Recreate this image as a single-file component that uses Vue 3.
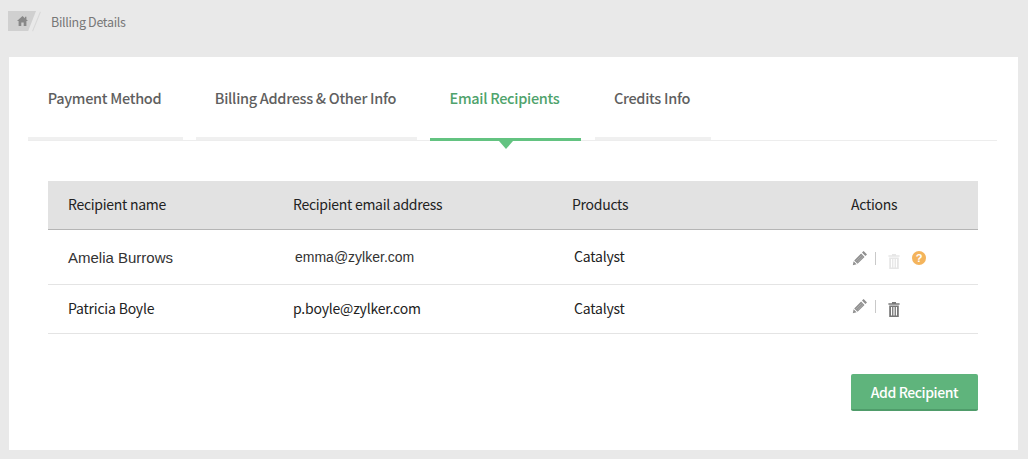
<script setup>
const tabs = [
  { label: 'Payment Method', width: 155 },
  { label: 'Billing Address & Other Info', width: 221 },
  { label: 'Email Recipients', width: 151, active: true },
  { label: 'Credits Info', width: 116 },
];

const rows = [
  { name: 'Amelia Burrows', email: 'emma@zylker.com', product: 'Catalyst', primary: true },
  { name: 'Patricia Boyle', email: 'p.boyle@zylker.com', product: 'Catalyst', primary: false },
];
</script>

<template>
  <div class="page">
    <div class="crumbs">
      <span class="home">
        <svg width="11" height="10" viewBox="0 0 11 10">
          <path d="M5.5 0 0 5h1.6v5h2.7V6.6h2.4V10h2.7V5H11L9.4 3.5V.8H8v1.4z" fill="#888" />
        </svg>
      </span>
      <span class="crumb-slash"></span>
      <span class="crumb-text">Billing Details</span>
    </div>

    <div class="card">
      <div class="tabs">
        <div
          v-for="tab in tabs"
          :key="tab.label"
          class="tab"
          :class="{ active: tab.active }"
          :style="{ width: tab.width + 'px' }"
        >
          {{ tab.label }}
        </div>
      </div>

      <div class="table">
        <div class="row head">
          <div>Recipient name</div>
          <div>Recipient email address</div>
          <div>Products</div>
          <div>Actions</div>
        </div>
        <div v-for="row in rows" :key="row.email" class="row body" :class="{ primary: row.primary }">
          <div class="name">{{ row.name }}</div>
          <div class="email">{{ row.email }}</div>
          <div class="product">{{ row.product }}</div>
          <div class="actions">
            <svg class="pencil" width="16" height="16" viewBox="0 0 16 16">
              <path d="M11.6 1 15 4.4 13.4 6 10 2.6zM9.1 3.5l3.4 3.4-6.9 6.9-3.4-3.4zM1.6 11.3l3 3L.8 15.2z" fill="#8f8f8f" />
              <path d="M9.8 5.4 4.2 11M11 6.6 5.4 12.2" stroke="#c4c4c4" stroke-width=".6" fill="none" />
            </svg>
            <span class="sep"></span>
            <svg class="trash" width="12" height="15" viewBox="0 0 12 15">
              <path d="M4 0h4v1.2h3.6v1.6H.4V1.2H4zM1.2 3.6h9.6V15H1.2zM3 5v8.6h1.1V5zm2.4 0v8.6h1.2V5zm2.5 0v8.6H9V5z" fill-rule="evenodd" />
            </svg>
            <span v-if="row.primary" class="help">?</span>
          </div>
        </div>
      </div>

      <div class="footer">
        <button class="add-btn">Add Recipient</button>
      </div>
    </div>
  </div>
</template>

<style>
html, body {
  margin: 0;
  background: #e9e9e9;
}
</style>

<style scoped>
.page {
  width: 1028px;
  height: 459px;
  box-sizing: border-box;
  padding: 0 10px 0 9px;
  overflow: hidden;
  background: #e9e9e9;
  font-family: "Noto Sans CJK SC", "Noto Sans", sans-serif;
}

.crumbs {
  height: 57px;
  box-sizing: border-box;
  padding-top: 11px;
  display: flex;
  align-items: flex-start;
}

.home {
  width: 28px;
  height: 20px;
  margin-left: -1px;
  background: #d0d0d0;
  clip-path: polygon(0 0, 100% 0, 72% 100%, 0 100%);
  display: flex;
  justify-content: flex-start;
  align-items: center;
  padding-left: 9px;
  box-sizing: border-box;
}

.crumb-slash {
  width: 1px;
  height: 21px;
  background: #d8d8d8;
  transform: rotate(22deg);
}

.crumb-text {
  margin-left: 14px;
  font-size: 12.5px;
  letter-spacing: -0.32px;
  line-height: 21px;
  color: #777;
}

.card {
  height: 393px;
  box-sizing: border-box;
  background: #fff;
  padding: 0 21px 0 19px;
}

.tabs {
  display: flex;
  gap: 13px;
  height: 84px;
  border-bottom: 1px solid #ededed;
  box-sizing: border-box;
}

.tab {
  box-sizing: border-box;
  height: 83px;
  padding: 29px 2px 0 0;
  border-bottom: 3px solid #f0f0f0;
  text-align: center;
  font-size: 14.5px;
  letter-spacing: -0.3px;
  line-height: 24px;
  font-weight: 500;
  color: #5f5f5f;
  position: relative;
}

.tab:last-child {
  margin-left: 1px;
}

.tab.active {
  height: 84px;
  color: #4fa36c;
  border-bottom-color: #63c381;
}

.tab.active::after {
  content: "";
  position: absolute;
  left: 50%;
  bottom: -11px;
  margin-left: -7px;
  border: 7px solid transparent;
  border-bottom: 0;
  border-top: 8px solid #63c381;
}

.table {
  margin: 40px 19px 0 20px;
}

.row {
  display: grid;
  grid-template-columns: 225px 279px 279px 127px;
  padding-left: 20px;
  align-items: center;
}

.head {
  height: 49px;
  padding-bottom: 2px;
  background: #e2e2e2;
  border-bottom: 1px solid #b5b5b5;
  box-sizing: border-box;
  font-size: 14px;
  letter-spacing: -0.28px;
  color: #222;
}

.body {
  height: 49px;
  box-sizing: border-box;
  border-bottom: 1px solid #e4e4e4;
  font-size: 14px;
  letter-spacing: -0.2px;
  color: #222;
}

.body:not(.primary) .name,
.body:not(.primary) .email,
.product {
  padding-bottom: 3px;
}

.primary {
  height: 55px;
  font-family: "Liberation Sans", Arial, sans-serif;
  letter-spacing: 0;
}

.primary .name {
  font-size: 15px;
  color: #333;
}

.primary .email {
  padding-left: 2px;
  font-size: 14px;
  color: #333;
}

.primary .product {
  padding-left: 2px;
  font-family: "Noto Sans CJK SC", "Noto Sans", sans-serif;
  font-size: 14px;
  letter-spacing: -0.2px;
}

.body:not(.primary) .product {
  padding-left: 2px;
}

.actions {
  display: flex;
  align-items: center;
  padding-left: 1px;
}

.primary .actions {
  margin-top: 2px;
}

.pencil {
  flex: none;
}

.sep {
  width: 1px;
  height: 13px;
  margin-left: 7px;
  background: #c9c9c9;
}

.body:not(.primary) .pencil,
.body:not(.primary) .sep {
  margin-bottom: 6px;
}

.body:not(.primary) .trash {
  margin-top: 0;
}

.trash {
  margin: 2px 0 0 12px;
  fill: #777;
}

.primary .trash {
  margin-top: 6px;
  fill: #e6e6e6;
}

.help {
  width: 14px;
  height: 14px;
  margin: 0 0 0 12px;
  border-radius: 50%;
  background: #f4b45c;
  color: #fff;
  font-family: "Liberation Sans", sans-serif;
  font-size: 11px;
  font-weight: 700;
  line-height: 14px;
  text-align: center;
}

.footer {
  display: flex;
  justify-content: flex-end;
  margin: 40px 19px 0 0;
}

.add-btn {
  width: 127px;
  height: 37px;
  border: 0;
  border-bottom: 2px solid #4f9c6a;
  border-radius: 2px;
  background: #5fb47c;
  color: #fff;
  font-family: inherit;
  font-size: 14px;
  letter-spacing: -0.42px;
  font-weight: 500;
  padding: 0;
}
</style>
